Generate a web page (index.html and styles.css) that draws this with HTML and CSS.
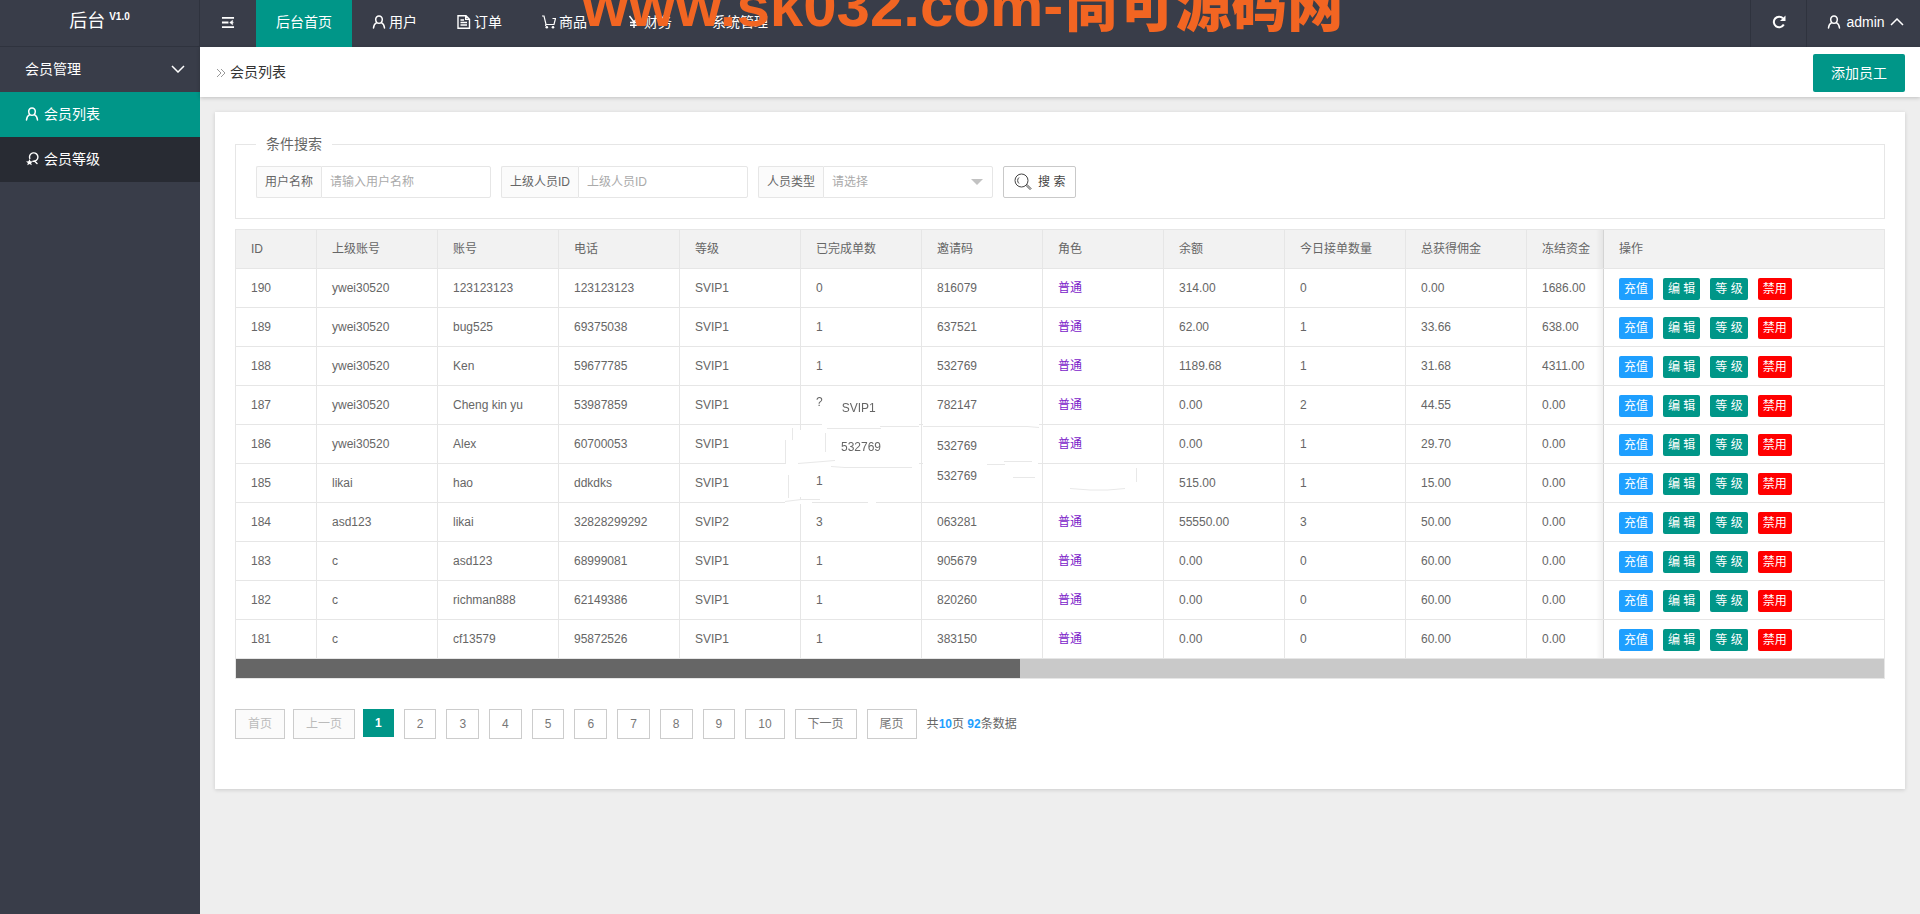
FILE: index.html
```html
<!DOCTYPE html>
<html lang="zh-CN">
<head>
<meta charset="utf-8">
<title>会员列表</title>
<link rel="stylesheet" href="styles.css">
</head>
<body>
<svg class="defs" aria-hidden="true">
  <symbol id="user" viewBox="0 0 14 14"><path d="M7 1a3.3 3.3 0 0 1 3.3 3.5C10.200 6.500 8.800 8.300 7 8.300S3.800 6.500 3.700 4.500A3.300 3.300 0 0 1 7 1zM4.700 7.600C2.800 8.600 1.700 10.500 1.500 13M9.300 7.600c1.900 1 3 2.900 3.200 5.400" fill="none" stroke="currentColor" stroke-width="1.500" stroke-linecap="round"/></symbol>
  <symbol id="medal" viewBox="0 0 14 14"><path d="M4.800 6.500A4.200 4.200 0 1 1 8 9.200M9.500 9l2.500 2.500" fill="none" stroke="currentColor" stroke-width="1.400" stroke-linecap="round"/><path d="M4.500 7l1 2.200 2.500.2-1.900 1.500.7 2.300-2.300-1.200-2.200 1.200.6-2.300L1 9.400l2.500-.2z" fill="currentColor"/></symbol>
  <symbol id="file" viewBox="0 0 14 14"><path d="M1 .7h8l3.500 3.500v9H1zM8.700.7v3.700h3.800M3.500 5h3.500M3.500 7.500h6.500M3.500 10h6.500" fill="none" stroke="currentColor" stroke-width="1.400"/></symbol>
  <symbol id="cart" viewBox="0 0 14 14"><path d="M0 1h2l2 8.500h8l1.500-6H10.500M3.700 9.500v1.500" fill="none" stroke="currentColor" stroke-width="1.200"/><circle cx="4.800" cy="12.300" r="1.300" fill="currentColor"/><circle cx="11" cy="12.300" r="1.300" fill="currentColor"/></symbol>
  <symbol id="yen" viewBox="0 0 14 14"><path d="M2.500 1L7 7l4.500-6M7 7v6M3 7.500h8M3 10.200h8" fill="none" stroke="currentColor" stroke-width="1.400"/></symbol>
  <symbol id="menu" viewBox="0 0 14 14"><path d="M.5 2h13M.5 7h7M.5 12h13" stroke="currentColor" stroke-width="2"/><path d="M13.200 7H9.500M12 4.500v5L8.800 7z" fill="currentColor" stroke="currentColor" stroke-width=".5"/></symbol>
  <symbol id="refresh" viewBox="0 0 14 14"><path d="M11.800 9.500A5.300 5.300 0 1 1 11 3.300" fill="none" stroke="currentColor" stroke-width="2"/><path d="M13.500.5v5.500H8z" fill="currentColor"/></symbol>
  <symbol id="chevron" viewBox="0 0 14 8"><path d="M1 1l6 6 6-6" fill="none" stroke="currentColor" stroke-width="1.500"/></symbol>
  <symbol id="guillemet" viewBox="0 0 10 10"><path d="M1 1l4 4-4 4M5 1l4 4-4 4" fill="none" stroke="currentColor"/></symbol>
  <symbol id="search" viewBox="0 0 18 18"><circle cx="7.500" cy="7.500" r="6.500" fill="none" stroke="currentColor"/><path d="M5 4.500a4 4 0 0 0 0 6M12 12.500l1-1 4 4-1 1z" fill="none" stroke="currentColor"/></symbol>
</svg>

<aside class="sidebar">
  <div class="logo">后台<sup>V1.0</sup></div>
  <nav>
    <button class="group" type="button">会员管理<svg class="chev"><use href="#chevron"/></svg></button>
    <a class="side-link active" href="#"><svg class="ico"><use href="#user"/></svg>会员列表</a>
    <a class="side-link" href="#"><svg class="ico"><use href="#medal"/></svg>会员等级</a>
  </nav>
</aside>

<div class="page">
  <header class="topbar">
    <button class="tool toggle" type="button" aria-label="菜单"><svg class="ico-sm"><use href="#menu"/></svg></button>
    <nav class="topnav">
      <a class="current" href="#">后台首页</a>
      <a href="#"><svg class="ico"><use href="#user"/></svg>用户</a>
      <a href="#"><svg class="ico"><use href="#file"/></svg>订单</a>
      <a href="#"><svg class="ico"><use href="#cart"/></svg>商品</a>
      <a href="#"><svg class="ico"><use href="#yen"/></svg>财务</a>
      <a href="#">系统管理</a>
    </nav>
    <button class="tool refresh" type="button" aria-label="刷新"><svg class="ico"><use href="#refresh"/></svg></button>
    <button class="tool account" type="button"><svg class="ico"><use href="#user"/></svg>admin<svg class="chev up"><use href="#chevron"/></svg></button>
  </header>

  <div class="crumbs">
    <svg class="arrows"><use href="#guillemet"/></svg>
    <h1>会员列表</h1>
    <button class="add" type="button">添加员工</button>
  </div>

  <main class="card">
    <form>
      <fieldset>
        <legend>条件搜索</legend>
        <div class="filters">
          <div class="field"><label for="name">用户名称</label><input id="name" type="text" placeholder="请输入用户名称"></div>
          <div class="field"><label for="parent">上级人员ID</label><input id="parent" type="text" placeholder="上级人员ID"></div>
          <div class="field pick"><label for="kind">人员类型</label><select id="kind"><option>请选择</option></select></div>
          <button class="search" type="button"><svg><use href="#search"/></svg>搜 索</button>
        </div>
      </fieldset>
    </form>

    <div class="grid">
      <div class="scroller">
        <table>
          <colgroup><col class="c-id"><col span="11" class="c-std"><col class="c-ops"></colgroup>
          <thead>
            <tr><th>ID</th><th>上级账号</th><th>账号</th><th>电话</th><th>等级</th><th>已完成单数</th><th>邀请码</th><th>角色</th><th>余额</th><th>今日接单数量</th><th>总获得佣金</th><th>冻结资金</th><th class="fixed">操作</th></tr>
          </thead>
          <tbody>
            <tr><td>190</td><td>ywei30520</td><td>123123123</td><td>123123123</td><td>SVIP1</td><td>0</td><td>816079</td><td class="role">普通</td><td>314.00</td><td>0</td><td>0.00</td><td>1686.00</td><td class="fixed"><div class="ops"><button class="blue">充值</button><button>编 辑</button><button>等 级</button><button class="red">禁用</button></div></td></tr>
            <tr><td>189</td><td>ywei30520</td><td>bug525</td><td>69375038</td><td>SVIP1</td><td>1</td><td>637521</td><td class="role">普通</td><td>62.00</td><td>1</td><td>33.66</td><td>638.00</td><td class="fixed"><div class="ops"><button class="blue">充值</button><button>编 辑</button><button>等 级</button><button class="red">禁用</button></div></td></tr>
            <tr><td>188</td><td>ywei30520</td><td>Ken</td><td>59677785</td><td>SVIP1</td><td>1</td><td>532769</td><td class="role">普通</td><td>1189.68</td><td>1</td><td>31.68</td><td>4311.00</td><td class="fixed"><div class="ops"><button class="blue">充值</button><button>编 辑</button><button>等 级</button><button class="red">禁用</button></div></td></tr>
            <tr><td>187</td><td>ywei30520</td><td>Cheng kin yu</td><td>53987859</td><td>SVIP1</td><td><div class="pair"><span>?</span><span class="low">SVIP1</span></div></td><td>782147</td><td class="role">普通</td><td>0.00</td><td>2</td><td>44.55</td><td>0.00</td><td class="fixed"><div class="ops"><button class="blue">充值</button><button>编 辑</button><button>等 级</button><button class="red">禁用</button></div></td></tr>
            <tr><td>186</td><td>ywei30520</td><td>Alex</td><td>60700053</td><td>SVIP1</td><td><div class="pair end"><span class="low">532769</span></div></td><td class="drop">532769</td><td class="role">普通</td><td>0.00</td><td>1</td><td>29.70</td><td>0.00</td><td class="fixed"><div class="ops"><button class="blue">充值</button><button>编 辑</button><button>等 级</button><button class="red">禁用</button></div></td></tr>
            <tr><td>185</td><td>likai</td><td>hao</td><td>ddkdks</td><td>SVIP1</td><td class="raise-sm">1</td><td class="raise">532769</td><td></td><td>515.00</td><td>1</td><td>15.00</td><td>0.00</td><td class="fixed"><div class="ops"><button class="blue">充值</button><button>编 辑</button><button>等 级</button><button class="red">禁用</button></div></td></tr>
            <tr><td>184</td><td>asd123</td><td>likai</td><td>32828299292</td><td>SVIP2</td><td>3</td><td>063281</td><td class="role">普通</td><td>55550.00</td><td>3</td><td>50.00</td><td>0.00</td><td class="fixed"><div class="ops"><button class="blue">充值</button><button>编 辑</button><button>等 级</button><button class="red">禁用</button></div></td></tr>
            <tr><td>183</td><td>c</td><td>asd123</td><td>68999081</td><td>SVIP1</td><td>1</td><td>905679</td><td class="role">普通</td><td>0.00</td><td>0</td><td>60.00</td><td>0.00</td><td class="fixed"><div class="ops"><button class="blue">充值</button><button>编 辑</button><button>等 级</button><button class="red">禁用</button></div></td></tr>
            <tr><td>182</td><td>c</td><td>richman888</td><td>62149386</td><td>SVIP1</td><td>1</td><td>820260</td><td class="role">普通</td><td>0.00</td><td>0</td><td>60.00</td><td>0.00</td><td class="fixed"><div class="ops"><button class="blue">充值</button><button>编 辑</button><button>等 级</button><button class="red">禁用</button></div></td></tr>
            <tr><td>181</td><td>c</td><td>cf13579</td><td>95872526</td><td>SVIP1</td><td>1</td><td>383150</td><td class="role">普通</td><td>0.00</td><td>0</td><td>60.00</td><td>0.00</td><td class="fixed"><div class="ops"><button class="blue">充值</button><button>编 辑</button><button>等 级</button><button class="red">禁用</button></div></td></tr>
          </tbody>
        </table>
        <svg class="wear" viewBox="540 150 380 130" aria-hidden="true">
          <g fill="#fff"><path d="M586 193h97v4h-97zM687 193h116v4H687zM562 200h5v67h-5zM550 232h133v4H550zM687 232h115v4H687zM549 270h27v4h-27zM632 270h8v4h-8z"/></g>
          <path d="M591 198.500h54M644 196.500h39M687 196.500h104l12 1M556.500 198v12M549.500 210v23M589.500 203v19M562 233.500l37-3M595 236.500l14 1h67M751 234.500h18M768 231.500h28M552.500 245v23M549 271.500l16-2h19M777 247.500h22M834 258.500l20 1.500h18l17-1.500M900.500 238v14" fill="none" stroke="#e8e8e8"/>
        </svg>
      </div>
      <div class="track"><div class="thumb"></div></div>
    </div>

    <nav class="pager" aria-label="分页">
      <button disabled>首页</button><button disabled>上一页</button>
      <div class="pages">
        <span class="now">1</span><a href="#">2</a><a href="#">3</a><a href="#">4</a><a href="#">5</a><a href="#">6</a><a href="#">7</a><a href="#">8</a><a href="#">9</a><a href="#">10</a><a href="#">下一页</a><a href="#">尾页</a>
        <p>共<b>10</b>页 <b>92</b>条数据</p>
      </div>
    </nav>
  </main>
</div>
<div class="banner">www.sk032.com-<span>尚可源码网</span></div>
</body>
</html>
```

FILE: styles.css
```css
* { box-sizing: border-box; }

body {
  margin: 0;
  min-height: 100vh;
  display: flex;
  position: relative;
  overflow-x: hidden;
  background: #eee;
  color: #666;
  font: 14px/20px "Liberation Sans", "Noto Sans CJK SC", sans-serif;
}

a { color: inherit; text-decoration: none; }
button, input, select { font: inherit; color: inherit; margin: 0; }
button { border: 0; background: none; padding: 0; cursor: pointer; }
svg { flex: none; }
.defs { position: absolute; width: 0; height: 0; }
.ico { width: 14px; height: 14px; }
.ico-sm { width: 14px; height: 13px; }
.chev { width: 14px; height: 8px; }
.up { transform: rotate(180deg); }

/* Sidebar */
.sidebar { flex: none; width: 200px; background: #393d49; color: #fff; }
.logo {
  height: 47px;
  padding: 11px 0 0;
  border-right: 1px solid #2f333e;
  border-bottom: 1px solid #2f333e;
  font-size: 18px;
  line-height: 20px;
  text-align: center;
}
.logo sup { margin-left: 4px; font-size: 10px; font-weight: bold; line-height: 10px; }
.group, .side-link { display: flex; align-items: center; width: 100%; height: 45px; padding: 0 15px 2px 25px; }
.group { justify-content: space-between; }
.side-link { gap: 5px; background: #282b33; }
.side-link.active, .topnav .current { background: #009688; }

/* Header */
.page { flex: 1; min-width: 0; }
.topbar { display: flex; height: 47px; background: #393d49; color: #fff; }
.tool { display: flex; align-items: center; justify-content: center; padding-bottom: 3px; }
.toggle { width: 56px; }
.topnav { display: flex; flex: 1; }
.topnav a { display: flex; align-items: center; gap: 3px; padding: 0 20px 4px; }
.refresh { width: 56px; border-left: 1px solid #2f333e; }
.account { width: 114px; gap: 5px; padding-left: 4px; border-left: 1px solid #2f333e; }

.crumbs {
  display: flex;
  align-items: center;
  height: 50px;
  padding: 2px 15px 0 16px;
  background: #fff;
  color: #333;
  box-shadow: 0 1px 4px rgba(0, 0, 0, .2);
}
.arrows { width: 10px; height: 10px; margin-right: 4px; color: #999; }
h1 { flex: 1; margin: 0; padding-bottom: 2px; font-size: 14px; font-weight: normal; }
.add { width: 92px; height: 38px; border-radius: 2px; background: #009688; color: #fff; }

/* Card */
.card { margin: 15px; padding: 20px 20px 50px; background: #fff; box-shadow: 0 1px 4px rgba(0, 0, 0, .15); }
fieldset { margin: 0; padding: 10px 20px 20px; border: 1px solid #e6e6e6; }
legend { padding: 0 10px; line-height: 24px; }
.filters { display: flex; flex-wrap: wrap; gap: 10px; font-size: 12px; }
.field { display: flex; position: relative; height: 32px; }
.field label {
  padding: 0 8px;
  border: 1px solid #e6e6e6;
  border-right: 0;
  border-radius: 2px 0 0 2px;
  background: #fbfbfb;
  line-height: 30px;
}
.field input, .field select {
  width: 170px;
  padding: 0 8px;
  border: 1px solid #e6e6e6;
  border-radius: 0 2px 2px 0;
  background: #fff;
  appearance: none;
}
.field select, .field input::placeholder { color: #aaa; opacity: 1; }
.pick::after {
  content: "";
  position: absolute;
  top: 13px;
  right: 10px;
  border: 6px solid transparent;
  border-top-color: #c2c2c2;
  border-bottom: 0;
}
.search {
  display: flex;
  align-items: center;
  gap: 6px;
  height: 32px;
  padding: 0 10px;
  border: 1px solid #c9c9c9;
  border-radius: 2px;
  color: #444;
}
.search svg { width: 18px; height: 18px; }

/* Table */
.grid { margin-top: 10px; border: 1px solid #e6e6e6; font-size: 12px; }
.scroller { position: relative; overflow: hidden; }
table { width: 1692px; table-layout: fixed; border-collapse: separate; border-spacing: 0; }
.c-id { width: 81px; }
.c-std { width: 121px; }
.c-ops { width: 281px; }
th, td {
  height: 39px;
  padding: 0 15px;
  border-right: 1px solid #e6e6e6;
  border-bottom: 1px solid #e6e6e6;
  font-weight: normal;
  text-align: left;
  white-space: nowrap;
}
th { background: #f2f2f2; }
.role { color: #7b22c9; }
.fixed { position: sticky; right: 0; border-right: 0; border-left: 1px solid #e0e0e0; background: #fff; }
th.fixed { background: #f2f2f2; }
.fixed::before {
  content: "";
  position: absolute;
  top: 0;
  bottom: 0;
  right: 100%;
  width: 8px;
  background: linear-gradient(to left, rgba(0, 0, 0, .06), transparent);
}
.ops { display: flex; gap: 10px; padding-top: 2px; }
.ops button { height: 22px; padding: 0 5px; border-radius: 2px; background: #009688; color: #fff; line-height: 22px; }
.ops .blue { background: #1e9fff; }
.ops .red { background: #f00; }
.pair { display: flex; gap: 19px; }
.pair.end { padding-left: 25px; }
.low { padding-top: 6px; }
.drop { padding-top: 4px; }
.raise { padding-bottom: 14px; }
.raise-sm { padding-bottom: 4px; }
.wear { position: absolute; left: 540px; top: 150px; width: 380px; height: 130px; pointer-events: none; }
td > * { position: relative; z-index: 1; }

.track { height: 19px; background: #c9c9c9; }
.thumb { width: 47.6%; height: 100%; background: #666; }

/* Pager */
.pager { display: flex; gap: 8px; margin-top: 30px; font-size: 12px; }
.pages { display: flex; gap: 10px; align-items: flex-start; }
.pager button, .pages a { height: 30px; padding: 0 12px; border: 1px solid #ccc; color: #777; line-height: 28px; }
.pager button:disabled { background: #fbfbfb; color: #bbb; }
.now { height: 28px; padding: 0 12px; background: #009688; color: #fff; font-weight: bold; line-height: 28px; }
.pages p { margin: 0; line-height: 30px; }
.pages b { color: #1e9fff; }

/* Site banner laid over the header */
.banner {
  position: absolute;
  top: -26px;
  left: 582px;
  color: #f26522;
  font-size: 60px;
  font-weight: bold;
  line-height: 64px;
  white-space: nowrap;
  pointer-events: none;
}
.banner span { font-size: 56px; font-weight: 900; }
```
